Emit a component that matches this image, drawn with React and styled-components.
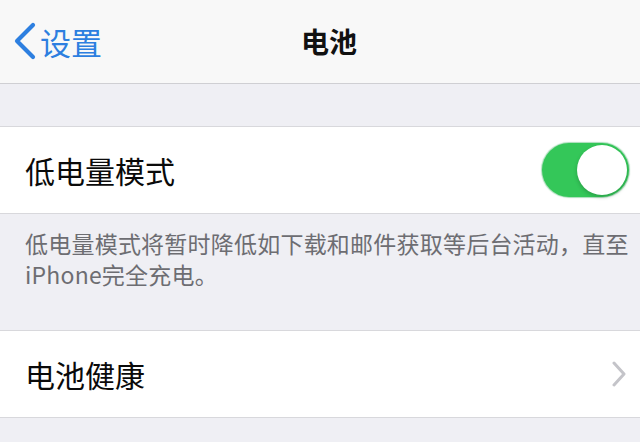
import React from "react";
import styled, { createGlobalStyle } from "styled-components";

const Global = createGlobalStyle`
  html, body { margin: 0; padding: 0; background: #efeff4; }
  body { font-family: "Noto Sans CJK SC", "Noto Sans", sans-serif; -webkit-font-smoothing: antialiased; }
  * { box-sizing: border-box; }
`;

const Page = styled.div`
  width: 640px;
  height: 442px;
  overflow: hidden;
  background: #efeff4;
  display: flex;
  flex-direction: column;
`;

const NavBar = styled.div`
  height: 84px;
  flex: none;
  background: #f8f8f8;
  border-bottom: 1px solid #cfcfd3;
  display: grid;
  grid-template-columns: 1fr auto 1fr;
  align-items: center;
  padding: 0 13px 2px;
`;

const Back = styled.div`
  display: flex;
  align-items: center;
  gap: 3px;
  color: #2d7fe0;
  font-size: 31px;
  line-height: 1;
`;

const BackLabel = styled.span`
  position: relative;
  top: 1px;
`;

const Title = styled.div`
  font-size: 28px;
  font-weight: 700;
  color: #111;
  transform: translateX(9px);
`;

const Spacer = styled.div`
  height: ${(p) => p.$h}px;
  flex: none;
`;

const Row = styled.div`
  height: 88px;
  flex: none;
  background: #fff;
  border-top: 1px solid #d8d8dc;
  border-bottom: 1px solid #d8d8dc;
  display: flex;
  align-items: center;
  justify-content: space-between;
  padding: 0 12px 0 25px;
`;

const Label = styled.span`
  font-size: 30px;
  color: #0a0a0a;
`;

const Toggle = styled.div`
  width: 87px;
  height: 54px;
  border-radius: 27px;
  background: #34c759;
  box-shadow: 0 0 1px 1px rgba(40, 170, 80, 0.4);
  display: flex;
  align-items: center;
  justify-content: flex-end;
  padding: 2px;
  margin-right: -1px;
`;

const Knob = styled.div`
  width: 50px;
  height: 50px;
  border-radius: 50%;
  background: #fff;
  box-shadow: 0 2px 4px rgba(0, 0, 0, 0.2);
`;

const Footer = styled.div`
  height: 116px;
  flex: none;
  padding: 14px 10px 0 25px;
  font-size: 23px;
  line-height: 31px;
  color: #6d6d72;
  letter-spacing: 0.22px;
`;

export default function App() {
  return (
    <Page>
      <Global />
      <NavBar>
        <Back>
          <svg width="24" height="38" viewBox="0 0 24 38" fill="none">
            <path d="M20 3 L4 19 L20 35" stroke="#2d7fe0" strokeWidth="4.2" strokeLinecap="round" strokeLinejoin="round" />
          </svg>
          <BackLabel>设置</BackLabel>
        </Back>
        <Title>电池</Title>
        <div />
      </NavBar>
      <Spacer $h={42} />
      <Row>
        <Label>低电量模式</Label>
        <Toggle>
          <Knob />
        </Toggle>
      </Row>
      <Footer>
        低电量模式将暂时降低如下载和邮件获取等后台活动，直至
        <br />
        iPhone完全充电。
      </Footer>
      <Row>
        <Label>电池健康</Label>
        <svg width="14" height="26" viewBox="0 0 14 26" fill="none" style={{ marginRight: 2 }}>
          <path d="M2 2 L12 13 L2 24" stroke="#c4c4c9" strokeWidth="3" strokeLinecap="round" strokeLinejoin="round" />
        </svg>
      </Row>
    </Page>
  );
}
